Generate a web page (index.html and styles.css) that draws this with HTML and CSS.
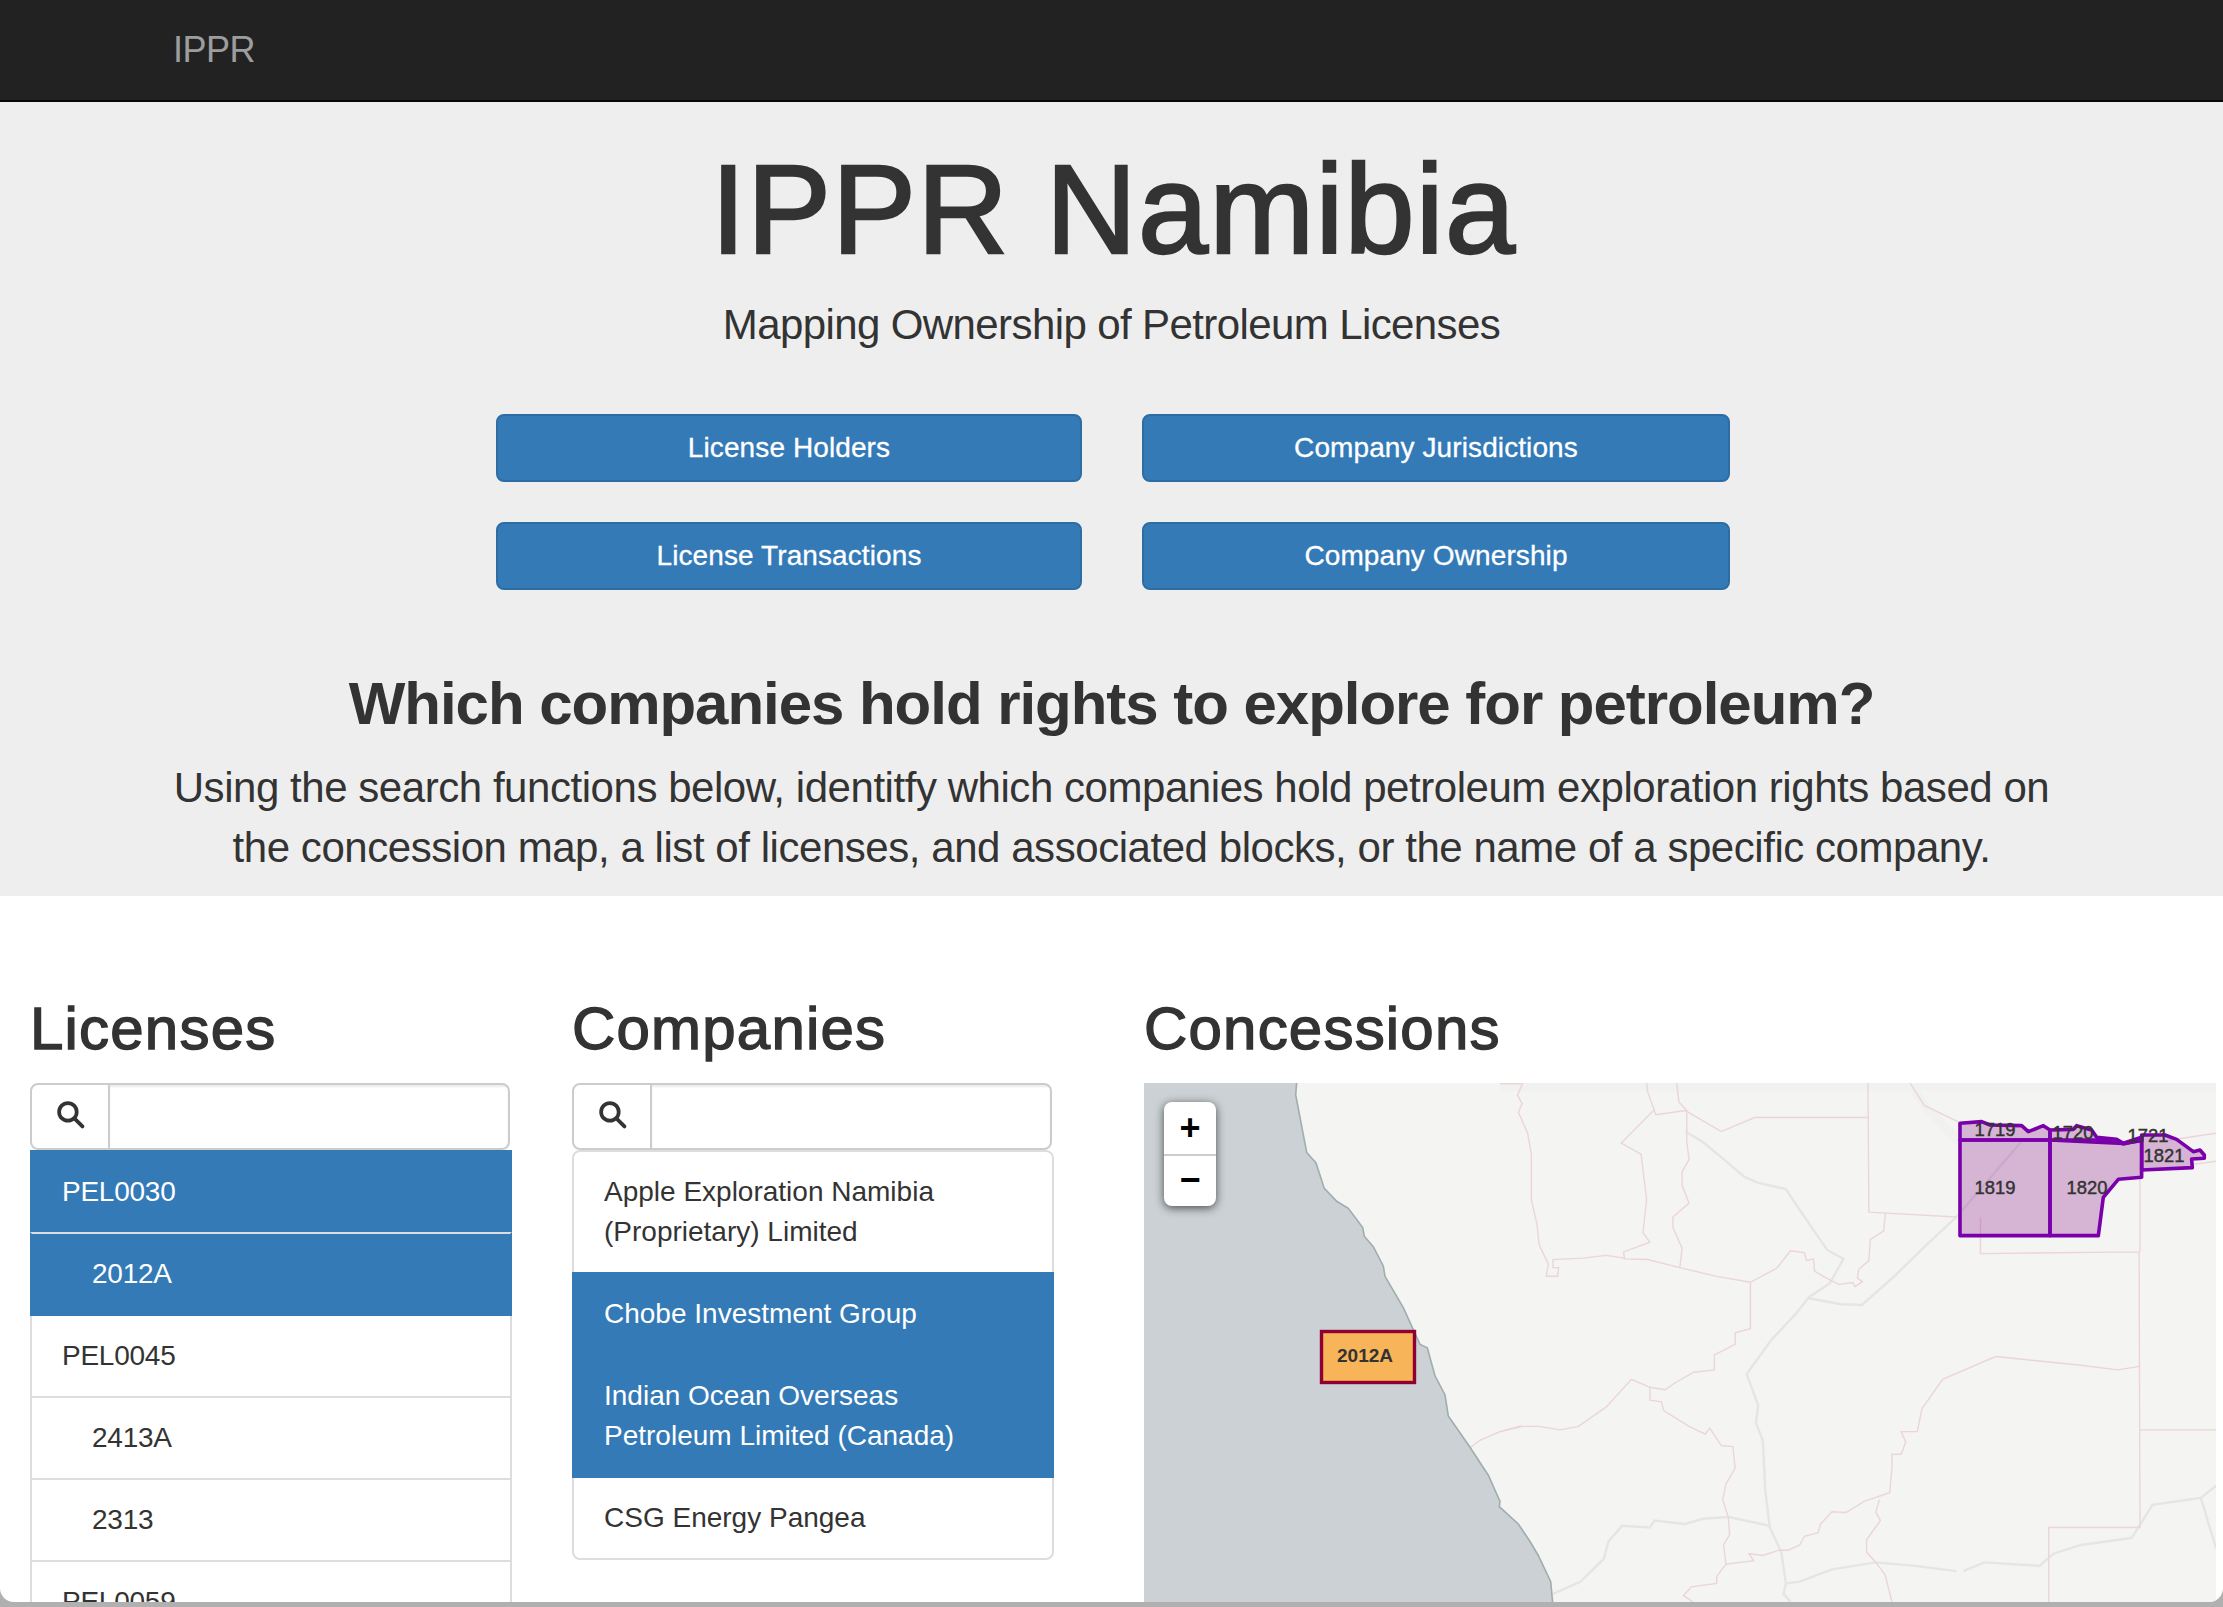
FILE: index.html
```html
<!DOCTYPE html>
<html lang="en">
<head>
<meta charset="utf-8">
<title>IPPR Namibia</title>
<link rel="stylesheet" href="styles.css">
</head>
<body>
<div class="window">
  <nav class="navbar"><a class="brand">IPPR</a></nav>
  <header class="jumbotron">
    <h1 class="title">IPPR Namibia</h1>
    <p class="subtitle">Mapping Ownership of Petroleum Licenses</p>
    <div class="button-grid">
      <a class="btn">License Holders</a>
      <a class="btn">Company Jurisdictions</a>
      <a class="btn">License Transactions</a>
      <a class="btn">Company Ownership</a>
    </div>
    <h2 class="question">Which companies hold rights to explore for petroleum?</h2>
    <p class="lead">Using the search functions below, identitfy which companies hold petroleum exploration rights based on the concession map, a list of licenses, and associated blocks, or the name of a specific company.</p>
  </header>
  <main class="panels">
    <section class="panel">
      <h2 class="panel-title">Licenses</h2>
      <div class="search">
        <span class="search-addon"><svg class="search-icon" viewBox="0 0 28 28"><circle cx="11.5" cy="11.5" r="8.5"/><path d="M18 18l7.5 7.5"/></svg></span>
        <span class="search-input"></span>
      </div>
      <ul class="list">
        <li class="item active">PEL0030</li>
        <li class="item sub active">2012A</li>
        <li class="item">PEL0045</li>
        <li class="item sub">2413A</li>
        <li class="item sub">2313</li>
        <li class="item">PEL0059</li>
      </ul>
    </section>
    <section class="panel">
      <h2 class="panel-title">Companies</h2>
      <div class="search">
        <span class="search-addon"><svg class="search-icon" viewBox="0 0 28 28"><circle cx="11.5" cy="11.5" r="8.5"/><path d="M18 18l7.5 7.5"/></svg></span>
        <span class="search-input"></span>
      </div>
      <ul class="list companies">
        <li class="item">Apple Exploration Namibia (Proprietary) Limited</li>
        <li class="item active">Chobe Investment Group</li>
        <li class="item active">Indian Ocean Overseas Petroleum Limited (Canada)</li>
        <li class="item">CSG Energy Pangea</li>
      </ul>
    </section>
    <section class="panel panel-map">
      <h2 class="panel-title">Concessions</h2>
      <div class="map">
        <svg class="map-svg" viewBox="1144 1083 1072 520" preserveAspectRatio="none">
          <rect class="land" x="1144" y="1082" width="1072" height="521"/>
          <path class="water" d="M1144 1082H1296.7L1295.7 1095 1301.7 1126.3 1306.7 1152.5 1316 1163 1324.3 1188.4 1336.7 1201.3 1348.3 1208.3 1362.7 1227.5 1364.3 1236.2 1373.3 1246.7 1383.3 1265.9 1385 1276.3 1403.3 1307.7 1416 1335.6 1420 1344.4 1427.3 1347.9 1435 1375.8 1445 1395 1448.3 1415.9 1470 1447.3 1488.3 1475.2 1500 1501.4 1499.3 1506.6 1518.3 1524 1530 1541.5 1538.3 1555.5 1550.7 1581.6 1552.7 1603H1144Z"/>
          <path class="halo" d="M1500 1087H2216M1909 1082L1924 1105 1959 1142"/>
          <g transform="translate(1500 1060) scale(0.4611 0.3489)">
            <g class="roads">
              <path d="M402 205L440 235 490 290 530 335 560 352 620 370 650 430 710 545 745 570 715 640 670 680 640 730 590 800 535 900 560 990 555 1040 570 1090 575 1230 585 1340 610 1410 620 1500 615 1530 630 1553"/>
              <path d="M670 683L740 700 785 702 825 655 855 620 925 530 990 450 1130 235"/>
              <path d="M115 1530L175 1495 225 1430 235 1380 265 1335 325 1340 335 1320 400 1330 440 1315 495 1310 585 1335"/>
              <path d="M620 1500L650 1495 720 1460 815 1440 900 1450 990 1465M1005 1465L1050 1440 1170 1450 1200 1415 1260 1390 1370 1370 1415 1275 1520 1255 1553 1220M1520 1255L1553 1400"/>
            </g>
            <g class="borders">
              <path d="M318 63L320 90 338 157 402 145 480 205 552 165 798 165"/>
              <path d="M798 63L800 436 990 450"/>
              <path d="M836 440L832 490 803 515 800 575 778 600 775 625 786 635 770 650 765 638 735 643 708 625 682 605 680 570 665 575 660 552 630 547 600 597 543 637 470 620 390 595 320 572 270 570 268 550 325 522 310 495 318 400 306 270 263 238 333 145"/>
              <path d="M383 63L388 120 405 145 405 235 410 285 395 320 395 360 410 410 375 450 375 480 395 540 390 595"/>
              <path d="M100 620L125 620 127 595 115 595 115 572 180 568 230 560 270 568"/>
              <path d="M100 620L105 585 85 530 80 470 68 400 68 270 60 210 40 150 48 125 38 100 50 65"/>
              <path d="M0 68L50 68"/>
              <path d="M543 637L543 770 510 782 510 815 465 845 465 888 420 895 380 925 358 945 325 938 285 915 230 995 170 1050 130 1060 85 1050 50 1050 0 1065"/>
              <path d="M325 938L325 975 350 980 355 1005 410 1050 445 1072 455 1055 480 1105 505 1108 510 1170 490 1215 483 1260 495 1310 498 1360 485 1390 490 1445 550 1435 540 1415 570 1420 605 1405 625 1405 650 1390 660 1365 690 1355 695 1330 720 1295 750 1297 790 1265 845 1240 850 1170 850 1130 870 1130 880 1095 870 1065 905 1065 915 1000 960 915 1075 850 1260 875 1340 888 1387 878"/>
              <path d="M823 1260L815 1295 825 1320 795 1375 795 1410 815 1440 835 1475 850 1553"/>
              <path d="M490 1445L470 1480 470 1500 415 1510 398 1535 418 1553"/>
              <path d="M1042 452L1042 555 1386 550 1388 1340 1190 1340 1190 1553M1388 1060L1553 1060M1388 300L1388 550"/>
              <path d="M888 63L920 130 995 178M1450 230L1553 210M1500 300L1553 290"/>
            </g>
          </g>
          <g transform="translate(1130 1060) scale(0.3333 0.3489)">
            <path class="borders-solo" d="M1022 1110L1050 1090 1110 1065 1175 1048"/>
          </g>
          <path class="coast" d="M1296.7 1082L1295.7 1095 1301.7 1126.3 1306.7 1152.5 1316 1163 1324.3 1188.4 1336.7 1201.3 1348.3 1208.3 1362.7 1227.5 1364.3 1236.2 1373.3 1246.7 1383.3 1265.9 1385 1276.3 1403.3 1307.7 1416 1335.6 1420 1344.4 1427.3 1347.9 1435 1375.8 1445 1395 1448.3 1415.9 1470 1447.3 1488.3 1475.2 1500 1501.4 1499.3 1506.6 1518.3 1524 1530 1541.5 1538.3 1555.5 1550.7 1581.6 1552.7 1603"/>
          <rect class="block-selected" x="1321.5" y="1331.5" width="93" height="51"/>
          <text class="block-label-bold" x="1337" y="1362">2012A</text>
          <g transform="translate(1900 1080) scale(0.3333)" class="blocks">
            <path d="M180 130L245 125 270 135 365 137 385 155 430 137 450 150V180H180Z"/>
            <path d="M180 180H450V467H180Z"/>
            <path d="M450 150L520 148 530 137 575 150 590 172 650 178 670 190 450 180Z"/>
            <path d="M450 180H650L670 192 725 180V292L655 298 610 352 595 467H450Z"/>
            <path d="M725 165L795 165 830 178 880 215 900 210 913 225 913 235 875 237 877 263 725 270Z"/>
            <path d="M670 190L725 172 725 182Z"/>
          </g>
          <g class="block-labels">
            <text x="1995" y="1136">1719</text>
            <text x="2073" y="1139">1720</text>
            <text x="2148" y="1142">1721</text>
            <text x="2164" y="1162">1821</text>
            <text x="1995" y="1194">1819</text>
            <text x="2087" y="1194">1820</text>
          </g>
        </svg>
        <div class="zoom-control">
          <a class="zoom-btn">+</a>
          <a class="zoom-btn">&#8722;</a>
        </div>
      </div>
    </section>
  </main>
</div>
</body>
</html>
```
FILE: styles.css
```css
* { box-sizing: border-box; }
html, body { margin: 0; height: 100%; }
body {
  overflow: hidden;
  background: linear-gradient(#6f6f6f, #b0b0b0 5px);
  font-family: "Liberation Sans", Arial, sans-serif;
  color: #333;
  font-size: 28px;
  line-height: 40px;
}
.window {
  height: 1602px;
  overflow: hidden;
  background: #fff;
  border-radius: 0 0 14px 14px;
}
.navbar {
  height: 102px;
  background: #222;
  border-bottom: 2px solid #080808;
  padding-left: 173px;
}
.brand { color: #9d9d9d; font-size: 36px; line-height: 100px; letter-spacing: -.5px; }
.jumbotron {
  height: 794px;
  background: #eee;
  text-align: center;
  padding-top: 39px;
}
.title {
  margin: 0;
  padding-left: 4px;
  font-size: 126px;
  line-height: 138px;
  font-weight: 400;
  letter-spacing: 1.2px;
  -webkit-text-stroke: 2.4px #333;
}
.subtitle { margin: 16px 0 0; font-size: 42px; line-height: 60px; font-weight: 400; letter-spacing: -.6px; }
.button-grid {
  display: grid;
  grid-template-columns: 586px 588px;
  grid-auto-rows: 68px;
  gap: 40px 60px;
  justify-content: center;
  margin: 59px 0 0;
  padding-left: 3px;
}
.btn {
  display: block;
  background: #337ab7;
  border: 2px solid #2e6da4;
  border-radius: 8px;
  color: #fff;
  font-size: 28px;
  line-height: 64px;
  -webkit-text-stroke: .3px #fff;
  letter-spacing: .1px;
}
.question {
  margin: 81px 0 0;
  font-size: 60px;
  line-height: 66px;
  font-weight: 700;
  letter-spacing: -1.03px;
}
.lead {
  margin: 21px auto 0;
  width: 1920px;
  font-size: 42px;
  line-height: 60px;
  letter-spacing: -.45px;
}
.panels {
  display: grid;
  grid-template-columns: 482px 482px 1072px;
  column-gap: 60px;
  padding: 100px 7px 0 30px;
}
.panel-map { margin-left: 30px; }
.panel-title {
  margin: 0 0 21px;
  font-size: 60px;
  line-height: 66px;
  font-weight: 400;
  -webkit-text-stroke: 1.4px #333;
  letter-spacing: 1.2px;
}
.search {
  display: flex;
  width: 480px;
  height: 67px;
  border: 2px solid #ccc;
  border-radius: 8px;
  overflow: hidden;
}
.search-addon {
  display: flex;
  align-items: center;
  justify-content: center;
  width: 78px;
  border-right: 2px solid #ccc;
  padding-bottom: 5px;
}
.search-icon { width: 29px; height: 29px; fill: none; stroke: #333; stroke-width: 3.6px; stroke-linecap: round; }
.search-input { flex: 1; box-shadow: inset 0 2px 2px rgba(0, 0, 0, .075); }
.list { margin: 0; padding: 0; list-style: none; }
.item {
  border: 2px solid #ddd;
  margin-bottom: -2px;
  padding: 20px 30px;
  letter-spacing: -.25px;
  background: #fff;
}
.item.sub { padding-left: 60px; }
.item.active {
  position: relative;
  z-index: 2;
  background: #337ab7;
  border-color: #337ab7;
  color: #fff;
}
.item.active + .item.active { border-top-color: #ddd; }
.list.companies .item { letter-spacing: 0; }
.list.companies .item.active + .item.active { border-top-color: #337ab7; }
.list.companies .item:first-child { border-radius: 8px 8px 0 0; }
.list.companies .item:last-child { border-radius: 0 0 8px 8px; }
.map {
  position: relative;
  height: 520px;
  background: #f4f4f2;
}
.map-svg { display: block; width: 1072px; height: 520px; }
.land { fill: #f4f4f2; }
.water { fill: #cbd1d4; }
.coast { fill: none; stroke: #a0adae; stroke-width: 1.6px; }
.halo { fill: none; stroke: #f1f1ef; stroke-width: 9px; }
.roads path { fill: none; stroke: #e5e5e4; stroke-width: 2.4px; vector-effect: non-scaling-stroke; }
.borders path, .borders-solo { fill: none; stroke: #ebd5d8; stroke-width: 1.4px; vector-effect: non-scaling-stroke; }
.block-selected { fill: #f8b458; stroke: #8f0035; stroke-width: 3.4px; }
.block-label-bold { font-size: 19px; font-weight: 700; fill: #333; }
.blocks path {
  fill: rgba(128, 0, 128, .26);
  stroke: #7a00ac;
  stroke-width: 3.6px;
  stroke-linejoin: round;
  vector-effect: non-scaling-stroke;
}
.block-labels text { font-size: 18.4px; fill: #333; text-anchor: middle; stroke: #333; stroke-width: .45px; }
.zoom-control {
  position: absolute;
  left: 20px;
  top: 19px;
  width: 52px;
  border-radius: 8px;
  background: #fff;
  box-shadow: 0 2px 10px rgba(0, 0, 0, .65);
  overflow: hidden;
}
.zoom-btn {
  display: block;
  height: 52px;
  text-align: center;
  font-family: "Liberation Sans", Arial, sans-serif;
  font-size: 36px;
  line-height: 48px;
  font-weight: 700;
  color: #000;
}
.zoom-btn:first-child { line-height: 52px; }
.zoom-btn + .zoom-btn { border-top: 2px solid #ccc; }
```
